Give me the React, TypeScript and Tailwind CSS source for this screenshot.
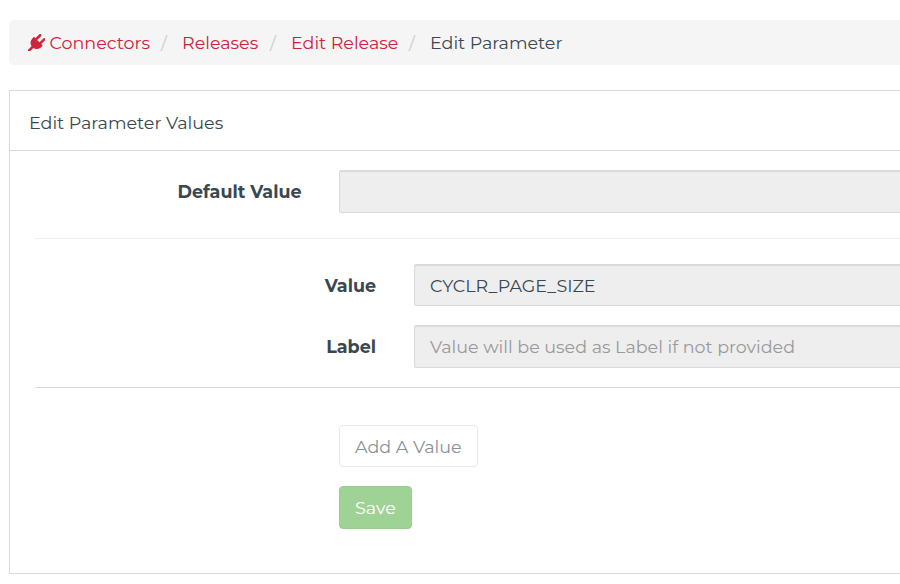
import type { ReactNode } from 'react';

function PlugIcon() {
  return (
    <svg viewBox="0 0 1792 1792" className="h-[17.5px] w-[17.5px] shrink-0 fill-[#cf223b]" aria-hidden="true">
      <path d="M1755 453q37 38 37 90.5t-37 90.5l-401 400 150 150-160 160q-163 163-389.5 186.5t-411.5-100.5l-362 362h-181v-181l362-362q-124-185-100.5-411.5t186.5-389.5l160-160 150 150 400-401q38-37 91-37t90 37 37 90.5-37 90.5l-400 401 234 234 401-400q38-37 91-37t90 37z" />
    </svg>
  );
}

function Slash() {
  return <span className="ml-[9px] mr-[14px] w-2 shrink-0 text-center text-[#cccccc]">/</span>;
}

function Field({ children, className }: { children?: ReactNode; className: string }) {
  return (
    <div className={`-mr-1 flex min-w-0 flex-1 items-center rounded-l-[2px] border border-[#dadada] bg-[#eeeeee] pl-[15px] shadow-[inset_0_1px_1px_rgba(0,0,0,0.09)] ${className}`}>
      {children}
    </div>
  );
}

export default function App() {
  return (
    <div className="flex h-[584px] w-[900px] flex-col overflow-hidden bg-white pl-[9px] pt-5 font-['Montserrat',sans-serif] text-[17.5px] font-normal leading-[25px] whitespace-nowrap text-[#3a474f]">
      <nav className="flex h-[45px] items-center rounded-l-[5px] bg-[#f5f5f5] pl-[18.5px]">
        <a className="flex w-[123.5px] items-center gap-[4.5px] text-[#cf223b]">
          <PlugIcon />
          <span>Connectors</span>
        </a>
        <Slash />
        <a className="w-[78px] text-[#cf223b]">Releases</a>
        <Slash />
        <a className="w-[108px] text-[#cf223b]">Edit Release</a>
        <Slash />
        <span>Edit Parameter</span>
      </nav>

      <section className="mt-[25px] h-[484px] border border-r-0 border-[#dadada]">
        <header className="flex h-[60px] items-center border-b border-[#dadada] pl-[19px] pt-1">
          <h1>Edit Parameter Values</h1>
        </header>

        <div className="pl-[25px] pt-[19px]">
          <div className="flex items-center">
            <label className="mr-[37.5px] w-[266.5px] text-right font-bold">Default Value</label>
            <Field className="h-[43px]" />
          </div>
          <div className="mt-[25px] border-t border-[#eeeeee]" />
          <div className="mt-[25px] flex items-center">
            <label className="mr-[38px] w-[341px] pt-px text-right font-bold">Value</label>
            <Field className="h-[42px] pt-px">
              <span>CYCLR_PAGE_SIZE</span>
            </Field>
          </div>
          <div className="mt-[19px] flex items-center">
            <label className="mr-[38px] w-[341px] text-right font-bold">Label</label>
            <Field className="h-[43px]">
              <span className="text-[#999999]">Value will be used as Label if not provided</span>
            </Field>
          </div>
          <div className="mt-[19px] border-t border-[#dadada]" />
          <div className="ml-[304px] mt-[37px] flex flex-col items-start gap-[19px]">
            <button className="flex h-[42px] w-[139px] items-center rounded-[4px] border border-[#e8e8e8] pl-[15px] pt-px text-[#899196]">Add A Value</button>
            <button className="flex h-[43px] w-[73px] items-center rounded-[4px] border border-[#98cf8d] bg-[#9fd295] pl-[15px] text-white">Save</button>
          </div>
        </div>
      </section>
    </div>
  );
}
